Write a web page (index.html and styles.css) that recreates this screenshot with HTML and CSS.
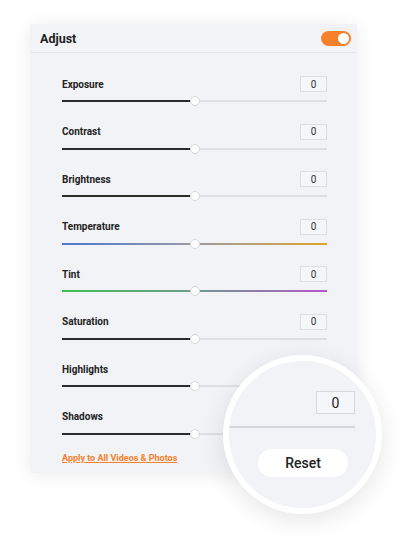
FILE: index.html
```html
<!DOCTYPE html>
<html lang="en">
<head>
    <meta charset="UTF-8">
    <meta name="viewport" content="width=device-width, initial-scale=1.0">
    <title>Adjust</title>
    <link rel="stylesheet" href="styles.css">
</head>
<body>
    <div class="panel">
        <div class="panel-header">
            <h2>Adjust</h2>
            <span class="toggle"><span class="knob"></span></span>
        </div>
        <div class="panel-body">
            <div id="adjustList" class="adjust-list"></div>
            <a class="apply-link" href="#">Apply to All Videos &amp; Photos</a>
        </div>
    </div>

    <div class="lens">
        <div class="lens-inner">
            <div class="lens-value">0</div>
            <div class="lens-track"></div>
            <button class="reset-btn">Reset</button>
        </div>
    </div>

    <script>
        const settings = [
            { name: 'Exposure', value: 0 },
            { name: 'Contrast', value: 0 },
            { name: 'Brightness', value: 0 },
            { name: 'Temperature', value: 0, kind: 'temp' },
            { name: 'Tint', value: 0, kind: 'tint' },
            { name: 'Saturation', value: 0 },
            { name: 'Highlights', value: 0 },
            { name: 'Shadows', value: 0 }
        ];

        const list = document.getElementById('adjustList');

        settings.forEach(item => {
            const pos = (item.value + 100) / 2;
            const row = document.createElement('div');
            row.className = 'adjust-row';
            row.innerHTML = `
                <div class="row-top">
                    <span class="row-label">${item.name}</span>
                    <span class="value-box">${item.value}</span>
                </div>
                <div class="slider ${item.kind ? 'slider-' + item.kind : ''}">
                    <div class="track"></div>
                    ${item.kind ? '' : `<div class="fill" style="width: ${pos}%"></div>`}
                    <span class="thumb" style="left: ${pos}%"></span>
                </div>
            `;
            list.appendChild(row);
        });
    </script>
</body>
</html>
```

FILE: styles.css
```css
* {
    box-sizing: border-box;
    margin: 0;
    padding: 0;
    font-family: Roboto, 'Liberation Sans', sans-serif;
}

body {
    width: 418px;
    height: 550px;
    background: #ffffff;
    position: relative;
    overflow: hidden;
}

.panel {
    margin: 24px 0 0 30px;
    width: 327px;
    height: 449px;
    background: #f2f3f7;
    box-shadow: 0 2px 18px rgba(0, 0, 0, 0.08);
}

.panel-header {
    height: 29px;
    display: flex;
    align-items: center;
    justify-content: space-between;
    padding: 0 6px 0 10px;
    border-bottom: 1px solid #e6e7ec;
}

.panel-header h2 {
    font-size: 12.5px;
    font-weight: 700;
    color: #1e1e1e;
}

.toggle {
    width: 30px;
    height: 15px;
    border-radius: 8px;
    background: #f7812a;
    display: flex;
    align-items: center;
    justify-content: flex-end;
    padding-right: 2px;
}

.knob {
    width: 11px;
    height: 11px;
    border-radius: 50%;
    background: #ffffff;
}

.panel-body {
    padding: 23px 30px 0 32px;
}

.adjust-list {
    display: flex;
    flex-direction: column;
    gap: 17.5px;
}

.row-top {
    display: flex;
    align-items: center;
    justify-content: space-between;
    height: 16px;
}

.row-label {
    font-size: 10px;
    font-weight: 700;
    color: #222;
}

.value-box {
    width: 27px;
    height: 16px;
    border: 1px solid #dcdde2;
    background: #f5f6f9;
    font-size: 10px;
    color: #333;
    display: flex;
    align-items: center;
    justify-content: center;
}

.slider {
    position: relative;
    height: 10px;
    margin-top: 4px;
    display: flex;
    align-items: center;
}

.track {
    width: 100%;
    height: 2px;
    background: #dedfe3;
}

.fill {
    position: absolute;
    left: 0;
    top: 4px;
    height: 2px;
    background: #2b2b2b;
}

.slider-temp .track {
    background: linear-gradient(to right, #4a78d0, #9a9aa2 50%, #e2a52c);
}

.slider-tint .track {
    background: linear-gradient(to right, #3fbf55, #6f9a8c 50%, #b45ac8);
}

.thumb {
    position: absolute;
    top: 0;
    width: 10px;
    height: 10px;
    margin-left: -5px;
    border-radius: 50%;
    background: #ffffff;
    border: 1px solid #d6d7dc;
}

.apply-link {
    display: block;
    margin-top: 14px;
    font-size: 9px;
    font-weight: 700;
    color: #f7812a;
    text-decoration: underline;
}

.lens {
    position: absolute;
    left: 223px;
    top: 355px;
    width: 159px;
    height: 159px;
    border-radius: 50%;
    border: 6px solid #ffffff;
    background: #f2f3f7;
    overflow: hidden;
    box-shadow: 0 6px 24px rgba(0, 0, 0, 0.1);
}

.lens-inner {
    width: 126px;
    padding-top: 30px;
    display: flex;
    flex-direction: column;
    align-items: flex-end;
}

.lens-value {
    width: 39px;
    height: 23px;
    border: 1px solid #d8d9de;
    background: #f5f6f9;
    font-size: 14px;
    color: #222;
    display: flex;
    align-items: center;
    justify-content: center;
}

.lens-track {
    width: 100%;
    height: 2px;
    background: #d6d7dc;
    margin-top: 12px;
}

.reset-btn {
    align-self: flex-start;
    margin: 21px 0 0 29px;
    width: 90px;
    height: 28px;
    border: none;
    border-radius: 14px;
    background: #ffffff;
    font-size: 14px;
    font-weight: 500;
    color: #222;
}
```
